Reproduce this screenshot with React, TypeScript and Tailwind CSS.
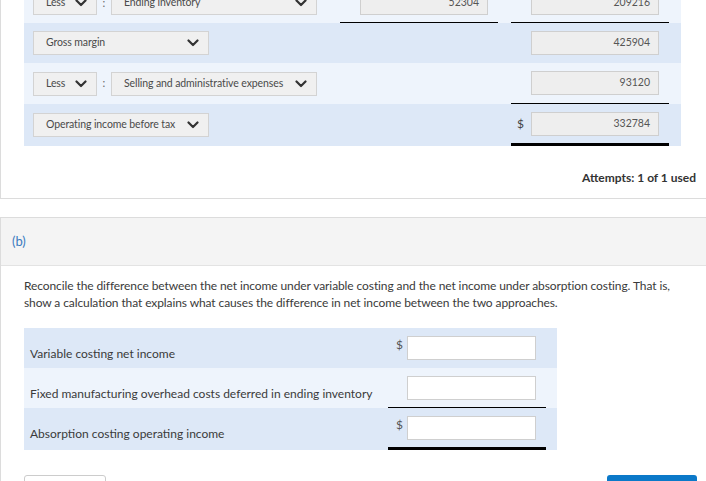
import React from 'react';

const Chevron: React.FC = () => (
  <svg width="12" height="8" viewBox="0 0 12 8" className="shrink-0">
    <polyline points="1.5 1.5 6 6 10.5 1.5" fill="none" stroke="#333" strokeWidth="2.2" strokeLinecap="round" strokeLinejoin="round" />
  </svg>
);

interface SelectProps {
  label: string;
  width: string;
}

const Select: React.FC<SelectProps> = ({ label, width }) => (
  <div className={`${width} h-6 flex items-center justify-between pl-[12px] pr-[9px] bg-[#f0f0f0] border border-[#d3d3d3] text-[10.5px] text-[#4a4a4a] whitespace-nowrap tracking-[-0.1px]`}>
    <span>{label}</span>
    <Chevron />
  </div>
);

const NumBox: React.FC<{ value?: string }> = ({ value }) => (
  <div className="w-[128px] h-6 bg-[#eeeeee] border border-[#cfcfcf] text-[10.5px] text-[#555] flex items-center justify-end pr-[8px]">
    {value}
  </div>
);

const App: React.FC = () => {
  return (
    <div className="w-[706px] h-[481px] overflow-hidden bg-white text-[#333]" style={{ fontFamily: 'Lato, "Open Sans", sans-serif' }}>
      {/* Part (a) card, scrolled */}
      <div className="-mt-[17px] border-l border-b border-[#dcdcdc] pl-[23px] pr-[10px] pb-[12px]">
        <div className="w-[657px]">
          {/* Ending inventory row */}
          <div className="flex h-10 bg-[#eef4fc]">
            <div className="flex-1 flex items-center pl-[9px]">
              <Select label="Less" width="w-[64px]" />
              <span className="w-[14px] text-center text-[11px] text-[#666]">:</span>
              <Select label="Ending inventory" width="w-[206px]" />
            </div>
            <div className="w-[158px] border-b border-black flex items-center justify-end pr-[10px]">
              <NumBox value="52304" />
            </div>
            <div className="w-[13px]" />
            <div className="w-[158px] border-b border-black flex items-center justify-end pr-[10px]">
              <NumBox value="209216" />
            </div>
            <div className="w-[12px]" />
          </div>
          {/* Gross margin */}
          <div className="flex h-10 bg-[#dde8f7]">
            <div className="flex-1 flex items-center pl-[9px]">
              <Select label="Gross margin" width="w-[176px]" />
            </div>
            <div className="w-[158px]" />
            <div className="w-[13px]" />
            <div className="w-[158px] flex items-center justify-end pr-[10px]">
              <NumBox value="425904" />
            </div>
            <div className="w-[12px]" />
          </div>
          {/* Selling and administrative expenses */}
          <div className="flex h-[41px] bg-[#eef4fc]">
            <div className="flex-1 flex items-center pl-[9px]">
              <Select label="Less" width="w-[64px]" />
              <span className="w-[14px] text-center text-[11px] text-[#666]">:</span>
              <Select label="Selling and administrative expenses" width="w-[206px]" />
            </div>
            <div className="w-[158px]" />
            <div className="w-[13px]" />
            <div className="w-[158px] border-b border-black flex items-center justify-end pr-[10px]">
              <NumBox value="93120" />
            </div>
            <div className="w-[12px]" />
          </div>
          {/* Operating income before tax */}
          <div className="flex h-[42px] bg-[#dde8f7]">
            <div className="flex-1 flex items-center pl-[9px]">
              <Select label="Operating income before tax" width="w-[176px]" />
            </div>
            <div className="w-[158px]" />
            <div className="w-[13px]" />
            <div className="w-[158px] border-b-[3px] border-black flex items-center pr-[10px] pt-[1px]">
              <span className="pl-[6px] text-[12px] text-[#444]">$</span>
              <div className="ml-auto">
                <NumBox value="332784" />
              </div>
            </div>
            <div className="w-[12px]" />
          </div>
        </div>
        <div className="mt-[24px] text-right text-[12px] font-bold text-[#333] leading-[16px]">Attempts: 1 of 1 used</div>
      </div>

      {/* Part (b) card */}
      <div className="mt-[18px] border-l border-t border-[#dcdcdc]">
        <div className="h-[48px] bg-[#f4f4f4] border-b border-[#e3e3e3] flex items-center pl-[11px]">
          <span className="text-[13px] text-[#3a7bc0]">(b)</span>
        </div>
        <div className="pl-[23px] pr-[20px] pt-[11px]">
          <p className="text-[12px] leading-[17px] text-[#3a3a3a] tracking-[-0.1px]">
            Reconcile the difference between the net income under variable costing and the net income under absorption costing. That is, show a calculation that explains what causes the difference in net income between the two approaches.
          </p>
          <div className="mt-[17px] w-[533px] text-[12px] text-[#3a3a3a]">
            <div className="flex h-10 bg-[#dde8f7]">
              <div className="flex-1 pl-[6px] pt-[17px]">Variable costing net income</div>
              <div className="w-[158px] flex items-center pr-[10px]">
                <span className="pl-[8px] -mt-[6px] text-[12px] text-[#555]">$</span>
                <div className="ml-auto w-[129px] h-6 bg-white border border-[#cfcfcf]" />
              </div>
              <div className="w-[11px]" />
            </div>
            <div className="flex h-10 bg-[#eef4fc]">
              <div className="flex-1 pl-[6px] pt-[17px]">Fixed manufacturing overhead costs deferred in ending inventory</div>
              <div className="w-[158px] border-b border-black flex items-center pr-[10px]">
                <div className="ml-auto w-[129px] h-6 bg-white border border-[#cfcfcf]" />
              </div>
              <div className="w-[11px]" />
            </div>
            <div className="flex h-[42px] bg-[#dde8f7]">
              <div className="flex-1 pl-[6px] pt-[17px]">Absorption costing operating income</div>
              <div className="w-[158px] border-b-[3px] border-black flex items-center pr-[10px] pt-[1px]">
                <span className="pl-[8px] -mt-[6px] text-[12px] text-[#555]">$</span>
                <div className="ml-auto w-[129px] h-6 bg-white border border-[#cfcfcf]" />
              </div>
              <div className="w-[11px]" />
            </div>
          </div>
          <div className="mt-[25px] flex justify-between">
            <button className="w-[82px] h-[34px] bg-white border border-[#cccccc] rounded-[3px]" />
            <button className="w-[90px] h-[34px] bg-[#0b79c9] rounded-[3px] -mr-[11px]" />
          </div>
        </div>
      </div>
    </div>
  );
};

export default App;
